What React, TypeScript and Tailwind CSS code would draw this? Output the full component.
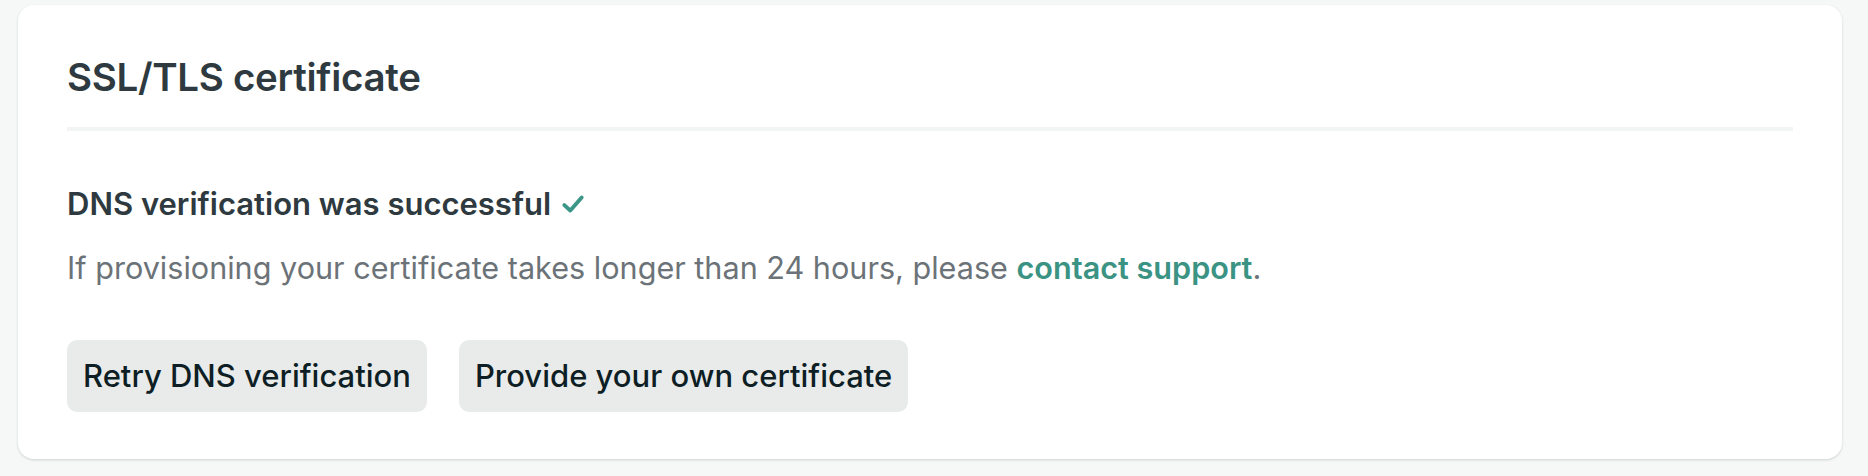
export default function App() {
  return (
    <div className="w-[1868px] h-[476px] bg-[#f6f8f8] pt-[5px] pl-[18px] pr-[26px] font-['Inter',sans-serif]">
      <section className="bg-white rounded-[16px] shadow-[0_1px_3px_rgba(14,30,37,0.12),0_1px_2px_rgba(14,30,37,0.06)] px-[49px] pt-[48px] pb-[47px]">
        <h2 className="text-[38.5px] leading-[48px] font-semibold tracking-[-0.3px] text-[#2e3a40]">
          SSL/TLS certificate
        </h2>
        <div className="mt-[26px] h-[4px] bg-[#f3f4f4]" />
        <div className="pt-[53px]">
          <h3 className="flex items-center text-[31px] leading-[40px] font-semibold text-[#2e3a40]">
            DNS verification was successful
            <svg viewBox="0 0 24 24" className="ml-[9px] w-[26px] h-[26px] text-[#3b9688]" fill="none" stroke="currentColor" strokeWidth="3.6" strokeLinecap="round" strokeLinejoin="round">
              <path d="M4 13 L9.5 18 L20 6" />
            </svg>
          </h3>
          <p className="mt-[24px] text-[30.6px] leading-[40px] text-[#6c7378]">
            If provisioning your certificate takes longer than 24 hours, please{" "}
            <a href="#" className="font-semibold text-[#3a9383]">contact support</a>.
          </p>
          <div className="mt-[52px] flex gap-[32px]">
            <button className="h-[72px] px-[16px] rounded-[10px] bg-[#e9ebeb] text-[31px] font-medium text-[#0e1e25]">
              Retry DNS verification
            </button>
            <button className="h-[72px] px-[16px] rounded-[10px] bg-[#e9ebeb] text-[31px] font-medium text-[#0e1e25]">
              Provide your own certificate
            </button>
          </div>
        </div>
      </section>
    </div>
  );
}
